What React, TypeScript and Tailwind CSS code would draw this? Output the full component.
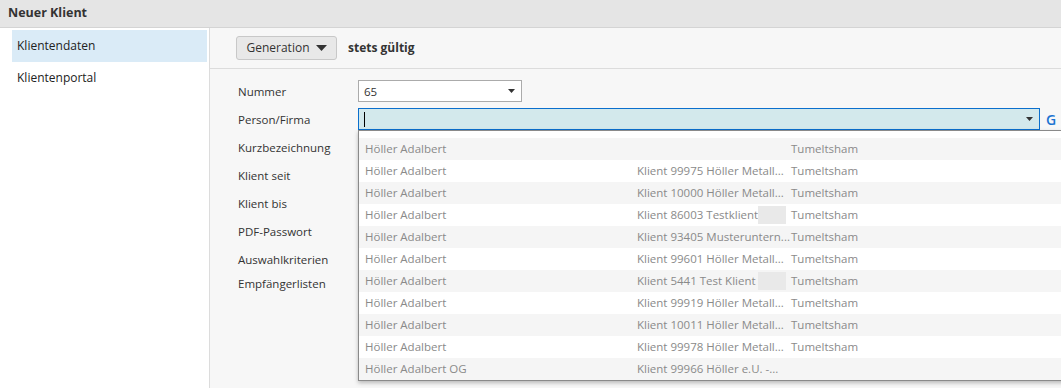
import React from "react";

const rows: { a: string; b: string; c: string; blur?: boolean }[] = [
  { a: "Höller Adalbert", b: "", c: "Tumeltsham" },
  { a: "Höller Adalbert", b: "Klient 99975 Höller Metall...", c: "Tumeltsham" },
  { a: "Höller Adalbert", b: "Klient 10000 Höller Metall...", c: "Tumeltsham" },
  { a: "Höller Adalbert", b: "Klient 86003 Testklient", c: "Tumeltsham", blur: true },
  { a: "Höller Adalbert", b: "Klient 93405 Musteruntern...", c: "Tumeltsham" },
  { a: "Höller Adalbert", b: "Klient 99601 Höller Metall...", c: "Tumeltsham" },
  { a: "Höller Adalbert", b: "Klient 5441 Test Klient", c: "Tumeltsham", blur: true },
  { a: "Höller Adalbert", b: "Klient 99919 Höller Metall...", c: "Tumeltsham" },
  { a: "Höller Adalbert", b: "Klient 10011 Höller Metall...", c: "Tumeltsham" },
  { a: "Höller Adalbert", b: "Klient 99978 Höller Metall...", c: "Tumeltsham" },
  { a: "Höller Adalbert OG", b: "Klient 99966 Höller e.U. -...", c: "" },
];

const labels = [
  "Kurzbezeichnung",
  "Klient seit",
  "Klient bis",
  "PDF-Passwort",
  "Auswahlkriterien",
];

function Caret() {
  return (
    <svg width="7" height="4" viewBox="0 0 7 4" className="shrink-0">
      <path d="M0 0 H7 L3.5 4 Z" fill="#333" />
    </svg>
  );
}

export default function App() {
  return (
    <div
      className="w-[1061px] h-[388px] overflow-hidden flex flex-col bg-white text-[11.5px] text-[#333]"
      style={{ fontFamily: '"Open Sans", "Noto Sans", sans-serif' }}
    >
      <div className="h-[28px] shrink-0 bg-[#e5e5e5] border-b border-[#d4d4d4] flex items-center pl-[8px]">
        <span className="font-bold text-[12.5px] text-[#333]">Neuer Klient</span>
      </div>
      <div className="flex flex-1 min-h-0">
        <div className="w-[210px] shrink-0 bg-white border-r border-[#dcdcdc] pt-[2px] pl-[12px] pr-[2px] text-[12px]">
          <div className="h-[32px] bg-[#daebf7] flex items-center pl-[5px] text-[#222]">Klientendaten</div>
          <div className="h-[32px] flex items-center pl-[5px] text-[#222]">Klientenportal</div>
        </div>
        <div className="flex-1 bg-[#f7f7f7] flex flex-col min-w-0">
          <div className="h-[41px] shrink-0 border-b border-[#dcdcdc] flex items-center pl-[26px] gap-[11px]">
            <div className="h-[24px] w-[101px] rounded-[3px] border border-[#c8c8c8] bg-[#e8e8e8] flex items-center justify-center gap-[6px] text-[#333] text-[12px]">
              <span>Generation</span>
              <svg width="11" height="6" viewBox="0 0 11 6">
                <path d="M0 0 H11 L5.5 6 Z" fill="#333" />
              </svg>
            </div>
            <span className="font-bold text-[#333] text-[12px]">stets gültig</span>
          </div>
          <div className="pt-[11px] pl-[28px] flex flex-col gap-[6px]">
            <div className="flex items-center h-[22px]">
              <div className="w-[120px] shrink-0 pt-[2px]">Nummer</div>
              <div className="w-[164px] h-[22px] bg-white border border-[#ababab] flex items-center justify-between pl-[5px] pr-[6px]">
                <span className="pt-[1px]">65</span>
                <Caret />
              </div>
            </div>
            <div className="flex items-center h-[22px] relative">
              <div className="w-[120px] shrink-0 pt-[2px]">Person/Firma</div>
              <div className="w-[682px] h-[22px] bg-[#d3e9ec] border border-[#0b6fcd] flex items-center justify-between pl-[5px] pr-[6px]">
                <span className="w-px h-[15px] bg-black" />
                <Caret />
              </div>
              <span className="ml-[6px] text-[#1a73d1] font-semibold text-[14px]">G</span>
              <div className="absolute left-[120px] top-[22px] w-[760px] h-[251px] bg-white border border-[#8a8a8a] shadow-[0_2px_4px_rgba(0,0,0,0.25)] pt-[7px] z-10">
                {rows.map((r, i) => (
                  <div
                    key={i}
                    className={`h-[22px] flex items-center text-[#8a8a8a] ${i % 2 === 0 ? "bg-[#f5f5f5]" : "bg-white"}`}
                  >
                    <div className="w-[278px] pl-[6px] shrink-0">{r.a}</div>
                    <div className="w-[154px] shrink-0 flex items-center whitespace-nowrap overflow-hidden">
                      <span>{r.b}</span>
                      {r.blur && <span className="ml-auto mr-[5px] w-[28px] h-[18px] bg-[#e9e9e9]" />}
                    </div>
                    <div>{r.c}</div>
                  </div>
                ))}
              </div>
            </div>
            {labels.map((l) => (
              <div key={l} className="flex items-center h-[22px]">
                <div className="w-[120px] shrink-0 pt-[2px]">{l}</div>
              </div>
            ))}
            <div className="flex items-center h-[22px] -mt-[4px]">
              <div className="w-[120px] shrink-0 pt-[2px]">Empfängerlisten</div>
            </div>
          </div>
        </div>
      </div>
    </div>
  );
}
